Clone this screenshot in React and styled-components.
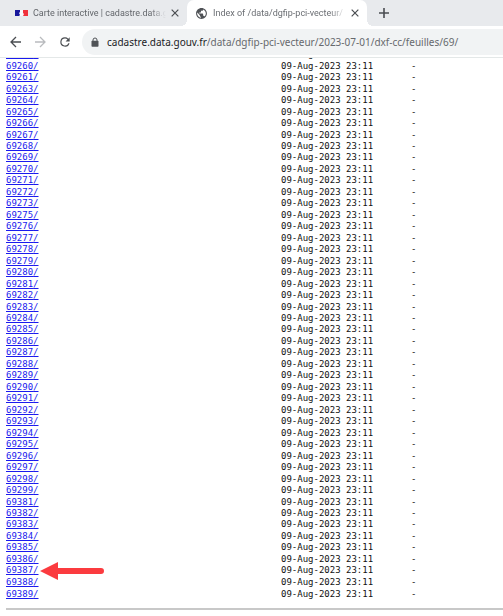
import React from 'react';
import styled, { createGlobalStyle } from 'styled-components';

const GlobalStyle = createGlobalStyle`
   * { box-sizing: border-box; }

   body {
      margin: 0;
      background: #fff;
      font-family: "Noto Sans", "Open Sans", sans-serif;
      overflow: hidden;
   }
`;

const BrowserBar = styled.header`
   position: sticky;
   top: 0;
   z-index: 1;
   background: #fff;
   border-bottom: 1px solid #e4e8e8;
`;

const TabStrip = styled.div`
   display: flex;
   height: 26px;
   background: #e8eaed;
`;

const Tab = styled.div`
   position: relative;
   display: flex;
   align-items: center;
   flex: 0 0 ${({ $active }) => ($active ? 180 : 187)}px;
   gap: 5px;
   min-width: 0;
   padding: 0 8px 0 ${({ $active }) => ($active ? 8 : 15)}px;
   border-radius: 7px 7px 0 0;
   background: ${({ $active }) => ($active ? '#fff' : 'transparent')};
   color: ${({ $active }) => ($active ? '#6b6e73' : '#63666b')};

   &::before,
   &::after {
      content: "";
      display: ${({ $active }) => ($active ? 'block' : 'none')};
      position: absolute;
      bottom: 0;
      width: 6px;
      height: 6px;
   }

   &::before {
      right: 100%;
      background: radial-gradient(circle at 0 0, transparent 6px, #fff 6px);
   }

   &::after {
      left: 100%;
      background: radial-gradient(circle at 100% 0, transparent 6px, #fff 6px);
   }
`;

const TabTitle = styled.span`
   flex: 1;
   min-width: 0;
   overflow: hidden;
   white-space: nowrap;
   font-family: Roboto, sans-serif;
   font-size: 9px;
   line-height: 14px;
   mask-image: linear-gradient(to right, #000 88%, transparent);
`;

const IconButton = styled.button`
   display: flex;
   flex: none;
   padding: 0;
   border: 0;
   background: none;
   color: ${({ disabled }) => (disabled ? '#b9bbbe' : '#4a4d51')};
`;

const NewTab = styled(IconButton)`
   align-items: center;
   margin-left: 11px;
`;

const Toolbar = styled.div`
   display: flex;
   align-items: center;
   height: 31px;
`;

const Controls = styled.nav`
   display: flex;
   align-items: center;
   gap: 12px;
   padding: 0 10px;
`;

const AddressBox = styled.div`
   display: flex;
   align-items: center;
   flex: 1;
   gap: 8px;
   min-width: 0;
   height: 26px;
   padding-left: 9px;
   border-radius: 13px 0 0 13px;
   background: #f1f3f4;
`;

const Address = styled.a`
   flex: 1;
   overflow: hidden;
   white-space: nowrap;
   color: #66696d;
   font-size: 10px;
   line-height: 16px;
   text-decoration: none;
`;

const Host = styled.span`
   color: #202124;
`;

const Page = styled.main`
   margin-top: -9px;
   padding-left: 6px;
`;

const Listing = styled.table`
   height: 551px;
   border-collapse: collapse;
   font: 9px "DejaVu Sans Mono", monospace;
   line-height: 11px;
   color: #111;
`;

const Cell = styled.td`
   width: ${({ width }) => width}px;
   padding: 0;
   white-space: nowrap;
`;

const FolderLink = styled.a`
   color: #1a1aee;
   text-decoration: underline;
`;

const Rule = styled.hr`
   margin: 8px 0 0;
   border: 0;
   border-top: 2px solid #c8c8c8;
`;

const Marked = styled.div`
   position: relative;
`;

const Pointer = styled.svg`
   position: absolute;
   top: 50%;
   left: 34px;
   transform: translateY(-50%);
`;

const range = (from, to) =>
   Array.from({ length: to - from + 1 }, (_, i) => from + i);

const folders = [
   ...range(69259, 69261),
   ...range(69263, 69273),
   ...range(69275, 69299),
   ...range(69381, 69389),
];

const Flag = () => (
   <svg width="13" height="8" viewBox="0 0 13 8">
      <path d="M4 1h5v6H4z" fill="#f7f7f9" />
      <path d="M0 1h5v2L4 4l1 2-1 1H0z" fill="#17179b" />
      <path d="M8 1h5v6H8l1-2-1-1z" fill="#f0313c" />
   </svg>
);

const Globe = () => (
   <svg width="13" height="13" viewBox="0 0 24 24" fill="#4f5256">
      <path d="M12 2C6.480 2 2 6.480 2 12s4.480 10 10 10 10-4.480 10-10S17.520 2 12 2zm-1 17.930c-3.950-.490-7-3.850-7-7.930 0-.620.080-1.210.210-1.790L9 15v1c0 1.100.900 2 2 2v1.930zm6.900-2.540c-.260-.810-1-1.390-1.900-1.390h-1v-3c0-.550-.450-1-1-1H8v-2h2c.550 0 1-.450 1-1V7h2c1.100 0 2-.900 2-2v-.410c2.930 1.190 5 4.060 5 7.410 0 2.080-.800 3.970-2.100 5.390z" />
   </svg>
);

const Stroke = ({ size = 12, width = 1.3, d }) => (
   <svg width={size} height={size} viewBox="0 0 12 12" fill="none" stroke="currentColor" strokeWidth={width}>
      <path d={d} />
   </svg>
);

const Reload = () => (
   <svg width="14" height="14" viewBox="0 0 24 24" fill="currentColor">
      <path d="M17.650 6.350A7.960 7.960 0 0 0 12 4a8 8 0 1 0 7.730 10h-2.080A6 6 0 1 1 12 6c1.660 0 3.140.690 4.220 1.780L13 11h7V4z" />
   </svg>
);

const Lock = () => (
   <svg width="8" height="10" viewBox="0 0 8 10">
      <path d="M2 4V3a2 2 0 0 1 4 0v1" fill="none" stroke="#505357" />
      <rect x="0.500" y="3.700" width="7" height="6" rx="0.800" fill="#505357" />
   </svg>
);

const CloseButton = () => (
   <IconButton aria-label="Close tab">
      <Stroke size={8} width={1.8} d="M1 1l10 10M11 1L1 11" />
   </IconButton>
);

const FolderRow = ({ name, marked }) => {
   const link = <FolderLink href={`#${name}`}>{name}/</FolderLink>;

   return (
      <tr>
         <Cell width={275}>
            {marked ? (
               <Marked>
                  {link}
                  <Pointer width="65" height="20" viewBox="0 0 65 20" fill="#fb3b3f">
                     <path d="M0 10 18 1v6h43a3 3 0 0 1 0 6H18v6z" />
                  </Pointer>
               </Marked>
            ) : link}
         </Cell>
         <Cell width={130}>09-Aug-2023 23:11</Cell>
         <Cell>-</Cell>
      </tr>
   );
};

const App = () => (
   <>
      <GlobalStyle />
      <BrowserBar>
         <TabStrip>
            <Tab>
               <Flag />
               <TabTitle>Carte interactive | cadastre.data.g</TabTitle>
               <CloseButton />
            </Tab>
            <Tab $active>
               <Globe />
               <TabTitle>Index of /data/dgfip-pci-vecteur/</TabTitle>
               <CloseButton />
            </Tab>
            <NewTab aria-label="New tab"><Stroke width={1.6} d="M6 1v10M1 6h10" /></NewTab>
         </TabStrip>
         <Toolbar>
            <Controls>
               <IconButton aria-label="Back"><Stroke d="M11 6H1M6 1L1 6l5 5" /></IconButton>
               <IconButton aria-label="Forward" disabled><Stroke d="M1 6h10M6 1l5 5-5 5" /></IconButton>
               <IconButton aria-label="Reload"><Reload /></IconButton>
            </Controls>
            <AddressBox>
               <Lock />
               <Address href="#address">
                  <Host>cadastre.data.gouv.fr</Host>
                  /data/dgfip-pci-vecteur/2023-07-01/dxf-cc/feuilles/69/
               </Address>
            </AddressBox>
         </Toolbar>
      </BrowserBar>
      <Page>
         <Listing>
            <tbody>
               {folders.map((name) => (
                  <FolderRow key={name} name={name} marked={name === 69387} />
               ))}
            </tbody>
         </Listing>
         <Rule />
      </Page>
   </>
);

export default App;
